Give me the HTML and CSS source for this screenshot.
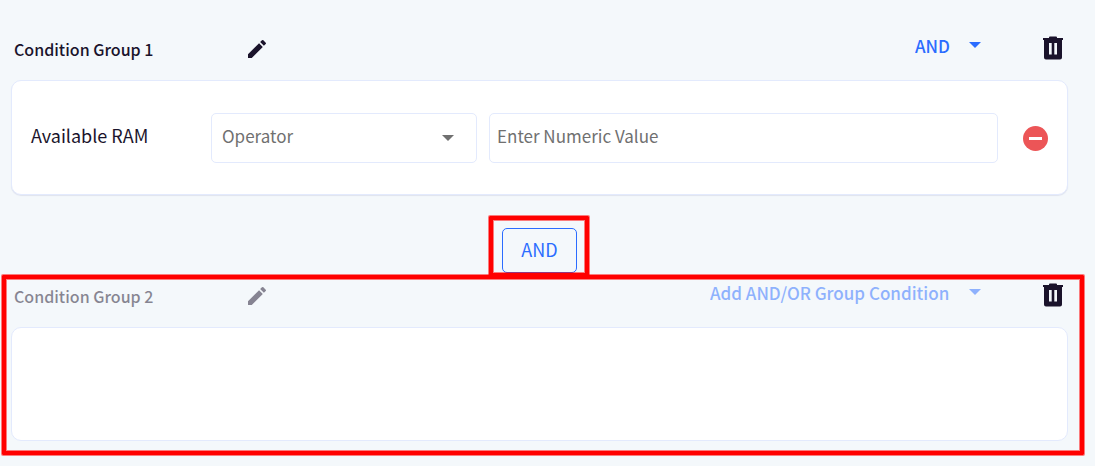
FILE: index.html
```html
<!DOCTYPE html>
<html lang="en">
<head>
<meta charset="utf-8">
<meta name="viewport" content="width=device-width, initial-scale=1">
<title>Condition Groups</title>
<link rel="stylesheet" href="styles.css">
</head>
<body>
<svg class="icon-sheet">
  <symbol id="icon-pencil" viewBox="0 0 24 24"><path d="M3 17.25V21h3.75L17.81 9.94l-3.75-3.75L3 17.25zM20.71 7.04a1 1 0 0 0 0-1.41l-2.34-2.34a1 1 0 0 0-1.41 0l-1.83 1.83 3.75 3.75 1.83-1.83z"/></symbol>
  <symbol id="icon-trash" viewBox="0 0 20 24"><path fill-rule="evenodd" d="M6 1.500Q6 .5 7 .5h6q1 0 1 1V2h6v2h-1v17.500q0 2-2 2H3q-2 0-2-2V4H0V2h6zM6 7v11.500h2.700V7zM11.300 7v11.500H14V7z"/></symbol>
  <symbol id="icon-caret" viewBox="0 0 12 6"><path d="M0 0h12L6 6z"/></symbol>
</svg>
<main class="groups">
  <section class="group">
    <header class="group-header">
      <h2 class="group-title">Condition Group 1</h2>
      <button class="icon-button edit" type="button" aria-label="Edit group name"><svg class="pencil"><use href="#icon-pencil"/></svg></button>
      <div class="logic">
        <select class="logic-select" aria-label="Group 1 logic"><option>AND</option><option>OR</option></select>
        <svg class="caret logic-caret"><use href="#icon-caret"/></svg>
      </div>
      <button class="icon-button" type="button" aria-label="Delete group 1"><svg class="trash"><use href="#icon-trash"/></svg></button>
    </header>
    <div class="card card-filled">
      <label class="condition-name" for="ram-value">Available RAM</label>
      <div class="operator">
        <select class="field operator-select" aria-label="Operator"><option>Operator</option></select>
        <svg class="caret operator-caret"><use href="#icon-caret"/></svg>
      </div>
      <input class="field value" id="ram-value" type="text" placeholder="Enter Numeric Value">
      <button class="icon-button" type="button" aria-label="Remove condition">
        <svg class="remove" viewBox="0 0 25 25"><circle cx="12.500" cy="12.500" r="12.500"/><path class="remove-bar" d="M6 11h13v3H6z"/></svg>
      </button>
    </div>
  </section>
  <div class="connector">
    <div class="connector-mark">
      <button class="connector-button" type="button">AND</button>
    </div>
  </div>
  <section class="group group-marked">
    <header class="group-header">
      <h2 class="group-title muted">Condition Group 2</h2>
      <button class="icon-button edit muted" type="button" aria-label="Edit group name"><svg class="pencil"><use href="#icon-pencil"/></svg></button>
      <div class="logic muted">
        <select class="logic-select" aria-label="Group 2 logic"><option>Add AND/OR Group Condition</option></select>
        <svg class="caret logic-caret"><use href="#icon-caret"/></svg>
      </div>
      <button class="icon-button" type="button" aria-label="Delete group 2"><svg class="trash"><use href="#icon-trash"/></svg></button>
    </header>
    <div class="card"></div>
  </section>
</main>
</body>
</html>
```
FILE: styles.css
```css
* { box-sizing: border-box; }

body {
  margin: 0;
  background: #f4f8fb;
  color: #1a132b;
  font-family: "Noto Sans CJK SC", "Noto Sans", sans-serif;
  font-size: 18px;
  line-height: 24px;
}

button, select, input { font: inherit; color: inherit; }

.icon-sheet { display: none; }

.groups { padding: 26px 27px 25px 11px; }

.group { position: relative; }

.group-header {
  display: flex;
  align-items: center;
  height: 54px;
  padding: 0 5px 8px 3px;
}

.group-title {
  width: 231px;
  margin: 0;
  font-size: 16px;
  font-weight: 500;
}

.muted { opacity: 0.5; }

.icon-button {
  display: flex;
  flex: none;
  padding: 0;
  border: 0;
  background: none;
  cursor: pointer;
}

.icon-button svg { fill: currentColor; }

.pencil { width: 24px; height: 24px; }

.trash { width: 20px; height: 24px; margin-bottom: 2px; }

.logic {
  position: relative;
  margin: 0 62px 6px auto;
  color: #2b6cff;
}

.logic-select {
  display: block;
  padding: 0 31px 0 0;
  border: 0;
  background: none;
  appearance: none;
  font-size: 17px;
  font-weight: 500;
}

.caret {
  position: absolute;
  width: 12px;
  height: 6px;
  fill: currentColor;
  pointer-events: none;
}

.logic-caret { top: 8px; right: 0; }

.card {
  min-height: 114px;
  border: 1px solid #e3eafd;
  border-radius: 10px;
  background: #fff;
}

.card-filled {
  display: flex;
  align-items: center;
  padding: 32px 19px 31px;
  box-shadow: 0 1px 1px #dfe3ee;
}

.condition-name { width: 180px; padding-bottom: 6px; }

.operator {
  position: relative;
  width: 266px;
  margin-right: 12px;
  color: #707070;
}

.field {
  height: 50px;
  border: 1px solid #e3eafd;
  border-radius: 5px;
  background: #fff;
  font-size: 17px;
}

.operator-select {
  display: block;
  width: 100%;
  padding: 0 40px 4px 10px;
  appearance: none;
}

.operator-caret { top: 22px; right: 23px; }

.value {
  flex: 1;
  min-width: 0;
  margin-right: 25px;
  padding: 0 7px 5px;
}

.value::placeholder { color: #707070; opacity: 1; }

.remove { width: 25px; height: 25px; color: #ec5557; }

.icon-button .remove-bar { fill: #fff; }

.connector {
  display: flex;
  justify-content: center;
  padding-top: 33px;
}

.connector-mark { position: relative; }

.connector-button {
  display: block;
  width: 75px;
  height: 45px;
  padding: 0 0 4px;
  border: 1px solid #2b6cff;
  border-radius: 5px;
  background: none;
  color: #2b6cff;
}

.connector-mark::after,
.group-marked::after {
  content: "";
  position: absolute;
  border: 4px solid #f00;
  border-radius: 1px;
  box-shadow: 0 0 0 1px #ff000080, inset 0 0 0 1px #ff000080;
  pointer-events: none;
}

.connector-mark::after { inset: -12px -12px -4px -13px; }

.group-marked::after { inset: 2px -16px -14px -9px; }
```
